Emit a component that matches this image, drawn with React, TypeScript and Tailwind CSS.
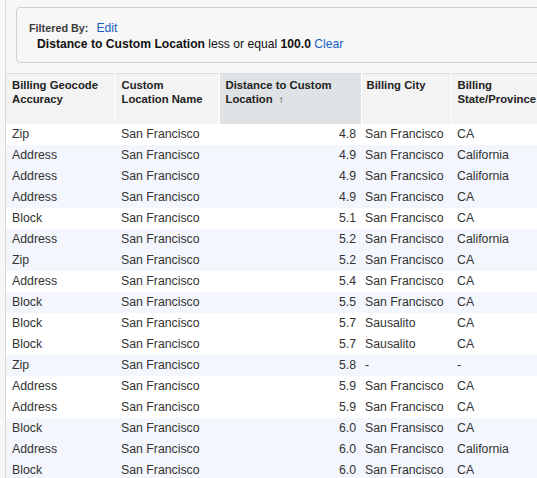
const rows = [
  ['Zip', 'San Francisco', '4.8', 'San Francisco', 'CA', false],
  ['Address', 'San Francisco', '4.9', 'San Francisco', 'California', true],
  ['Address', 'San Francisco', '4.9', 'San Francsico', 'California', true],
  ['Address', 'San Francisco', '4.9', 'San Francisco', 'CA', true],
  ['Block', 'San Francisco', '5.1', 'San Francisco', 'CA', false],
  ['Address', 'San Francisco', '5.2', 'San Francisco', 'California', true],
  ['Zip', 'San Francisco', '5.2', 'San Francisco', 'CA', true],
  ['Address', 'San Francisco', '5.4', 'San Francisco', 'CA', false],
  ['Block', 'San Francisco', '5.5', 'San Francisco', 'CA', true],
  ['Block', 'San Francisco', '5.7', 'Sausalito', 'CA', false],
  ['Block', 'San Francisco', '5.7', 'Sausalito', 'CA', false],
  ['Zip', 'San Francisco', '5.8', '-', '-', true],
  ['Address', 'San Francisco', '5.9', 'San Francisco', 'CA', false],
  ['Address', 'San Francisco', '5.9', 'San Francisco', 'CA', false],
  ['Block', 'San Francisco', '6.0', 'San Fransisco', 'CA', true],
  ['Address', 'San Francisco', '6.0', 'San Francisco', 'California', true],
  ['Block', 'San Francisco', '6.0', 'San Francisco', 'CA', true],
] as const;

export default function App() {
  return (
    <div className="h-[478px] w-[537px] overflow-hidden bg-[#f7f7f7] font-['Liberation_Sans',Arial,sans-serif] text-[#333]">
      <div className="ml-[5px] h-full border-l border-[#d8d8d8] bg-[#f7f7f7]">
        {/* Filter box */}
        <div className="pl-[10px] pt-[7px]">
          <div className="-mr-[20px] h-[56px] rounded-[4px] border border-[#cfcfcf] bg-[#f7f7f7] pl-[12px] pt-[12px]">
            <div className="flex items-baseline leading-[16px]">
              <span className="text-[10.8px] font-bold text-[#3c3c3c]">Filtered By:</span>
              <span className="ml-[8px] text-[12.2px] text-[#1b5fbf]">Edit</span>
            </div>
            <div className="ml-[8px] text-[12.15px] leading-[16px] text-[#111]">
              <span className="font-bold">Distance to Custom Location</span> less or equal{' '}
              <span className="font-bold">100.0</span>{' '}
              <span className="text-[#1b5fbf]">Clear</span>
            </div>
          </div>
        </div>

        {/* Table */}
        <table className="mt-[10px] w-[560px] table-fixed border-collapse border-t border-[#dcdcdc] text-[12.3px]">
          <colgroup>
            <col className="w-[108px]" />
            <col className="w-[105px]" />
            <col className="w-[142px]" />
            <col className="w-[90px]" />
            <col className="w-[115px]" />
          </colgroup>
          <thead>
            <tr className="h-[50px] text-left align-top text-[11.3px] font-bold leading-[14px] text-[#222]">
              <th className="border-r border-white bg-[#f3f3f3] px-[6px] pt-[4px]">Billing Geocode Accuracy</th>
              <th className="border-r border-white bg-[#f3f3f3] px-[7px] pt-[4px]">Custom Location Name</th>
              <th className="border-r border-white bg-[#e0e3e5] px-[6px] pt-[4px]">
                Distance to Custom Location <span className="ml-[3px] text-[10px]">↑</span>
              </th>
              <th className="border-r border-white bg-[#f3f3f3] px-[5px] pt-[4px]">Billing City</th>
              <th className="bg-[#f3f3f3] px-[6px] pt-[4px]">Billing State/Province</th>
            </tr>
          </thead>
          <tbody>
            {rows.map((r, i) => (
              <tr key={i} className={`h-[21px] leading-[21px] ${r[5] ? 'bg-[#f3f6fc]' : 'bg-white'}`}>
                <td className="px-[6px]">{r[0]}</td>
                <td className="px-[7px]">{r[1]}</td>
                <td className="px-[5px] text-right">{r[2]}</td>
                <td className="px-[4px]">{r[3]}</td>
                <td className="px-[6px]">{r[4]}</td>
              </tr>
            ))}
          </tbody>
        </table>
      </div>
    </div>
  );
}
